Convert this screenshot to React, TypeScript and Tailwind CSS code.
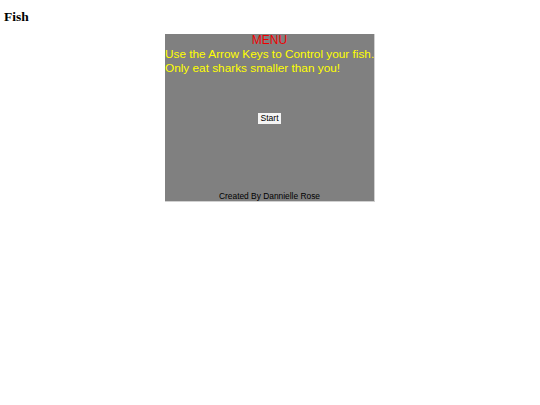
import React from 'react';

export default function App() {
  return (
    <div className="min-h-[405px] bg-white">
      <h1
        className="px-[4px] pt-[9px] text-[13.5px] font-bold leading-[15px] text-black"
        style={{ fontFamily: '"Liberation Serif", serif' }}
      >
        Fish
      </h1>
      <div
        className="mx-auto mt-[10px] flex h-[168px] w-[210px] flex-col border-r border-b border-[#d0d0d0] bg-[#808080]"
        style={{ fontFamily: '"Liberation Sans", Arial, sans-serif' }}
      >
        <div className="text-center text-[12px] leading-[13px] text-[#f00000]">MENU</div>
        <div className="whitespace-nowrap text-[11.8px] leading-[14px] text-[#ffff00]">
          <p>Use the Arrow Keys to Control your fish.</p>
          <p>Only eat sharks smaller than you!</p>
        </div>
        <div className="flex flex-1 justify-center pt-[38px]">
          <button className="h-[11px] bg-[#f4f4f4] px-[2px] text-[8.6px] leading-[11px] text-black">
            Start
          </button>
        </div>
        <div className="text-center text-[8.4px] leading-[10px] text-black">
          Created By Dannielle Rose
        </div>
      </div>
    </div>
  );
}
